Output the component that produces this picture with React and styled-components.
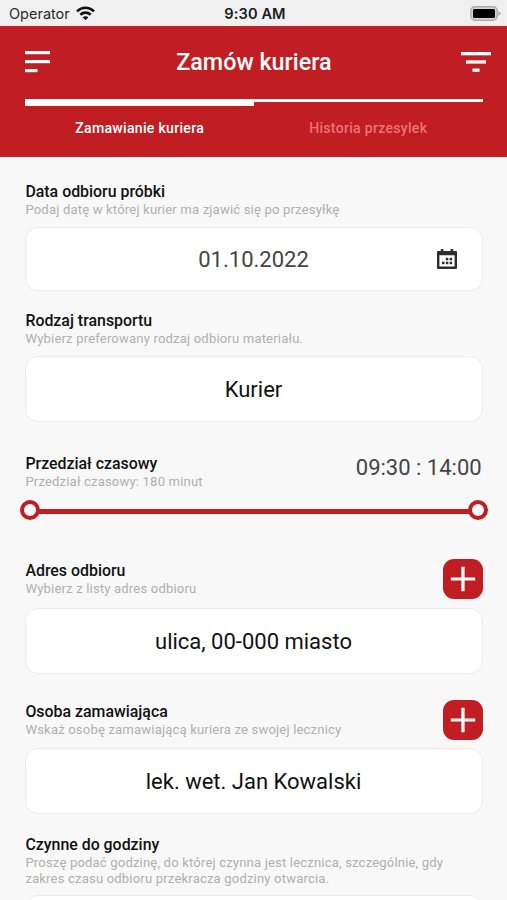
import React from 'react';
import styled, { createGlobalStyle } from 'styled-components';

const GlobalStyle = createGlobalStyle`
    :root {
        --color-primary: #c01e23;
        --color-background: #f8f8f8;
        --color-border: #ebebeb;
        --color-hint: #b0b0b0;
    }

    * {
        box-sizing: border-box;
    }

    body {
        margin: 0;
        background-color: var(--color-background);
        font-family: Roboto, "Liberation Sans", sans-serif;
    }
`;

const Screen = styled.div`
    height: 900px;
    overflow: hidden;
    background-color: var(--color-background);
`;

const StatusBar = styled.div`
    display: grid;
    grid-template-columns: 1fr auto 1fr;
    align-items: center;
    height: 26px;
    padding: 1px 6px 0 9px;
    background-color: #f0f0f0;
    color: #2b2b2b;
    font-family: Inter, sans-serif;
    font-size: 14.5px;
`;

const Carrier = styled.span`
    display: flex;
    align-items: center;
    gap: 6px;
`;

const Clock = styled.span`
    color: #1c1c1c;
    font-size: 14.6px;
    font-weight: 600;
    letter-spacing: 0.1px;
`;

const BatteryIcon = styled.svg`
    justify-self: end;
    margin-top: -1px;
`;

const HeaderStyled = styled.header`
    height: 131px;
    padding: 0 24.5px 0 25.4px;
    background-color: var(--color-primary);
    color: #fff;
`;

const TopRow = styled.div`
    display: grid;
    grid-template-columns: 30px 1fr 30px;
    align-items: center;
    height: 73px;
    margin-right: -8px;
    padding-bottom: 2px;
`;

const PageTitle = styled.h1`
    margin: 0;
    padding-right: 8px;
    font-size: 23.3px;
    font-weight: 500;
    text-align: center;
`;

const Tabs = styled.nav`
    display: flex;
`;

const Tab = styled.a`
    flex: 1;
    height: 50px;
    padding-top: ${({ $active }) => ($active ? '14px' : '18px')};
    border-top: ${({ $active }) => ($active ? '7px' : '3px')} solid #fff;
    color: ${({ $active }) => ($active ? '#fff' : '#ea7377')};
    font-size: 14.1px;
    font-weight: 500;
    letter-spacing: 0.28px;
    line-height: 16px;
    text-align: center;
`;

const Form = styled.main`
    padding: 25px 24.4px 0 25.4px;
`;

const Section = styled.section`
    height: ${({ $height }) => $height}px;
`;

const SectionHead = styled.div`
    display: flex;
    justify-content: space-between;
    height: ${({ $height }) => $height || 45}px;
`;

const Label = styled.h2`
    margin: 0;
    color: #111;
    font-size: 15.9px;
    font-weight: 500;
    line-height: 19px;
`;

const Hint = styled.p`
    margin: 1px 0 0;
    color: var(--color-hint);
    font-size: 13.1px;
    letter-spacing: 0.16px;
    line-height: 16px;
`;

const Field = styled.div`
    display: grid;
    grid-template-columns: 24px 1fr 24px;
    align-items: center;
    height: ${({ $height }) => $height || 66}px;
    padding: 0 21px;
    border: 1px solid var(--color-border);
    border-radius: 13px;
    background-color: #fff;
`;

const Value = styled.span`
    grid-column: 2;
    margin-left: -1px;
    color: ${({ $muted }) => ($muted ? '#444' : '#111')};
    font-size: 22px;
    text-align: center;
`;

const TimeRange = styled.span`
    margin: 0 1px 0 0;
    color: #444;
    font-size: 22px;
    line-height: 27px;
`;

const AddButton = styled.button`
    display: grid;
    place-items: center;
    width: 40px;
    height: 40px;
    margin-top: -2px;
    padding: 0;
    border: 0;
    border-radius: 11px;
    background-color: var(--color-primary);
`;

const Slider = styled.div`
    display: flex;
    align-items: center;
    margin: 1px -5px 0;
`;

const Track = styled.div`
    flex: 1;
    height: 5px;
    margin: 2px -1px 0;
    background-color: var(--color-primary);
`;

const Thumb = styled.div`
    width: 20px;
    height: 20px;
    border: 4px solid var(--color-primary);
    border-radius: 50%;
    background-color: #fff;
`;

const WifiIcon = () => (
    <svg width="19" height="15" viewBox="0 0 19 15" fill="none" stroke="#111" strokeWidth="2.6">
        <path d="M1 5.4C6 0.5 13 0.5 18 5.4" />
        <path d="M4.3 8.7C7.2 5.9 11.8 5.9 14.7 8.7" />
        <path d="M9.5 14.2L6.6 11.3C8.2 9.8 10.8 9.8 12.4 11.3Z" fill="#111" stroke="none" />
    </svg>
);

const Battery = () => (
    <BatteryIcon width="31" height="15" viewBox="0 0 31 15">
        <rect x="0.8" y="0.8" width="26.4" height="13.4" rx="4" fill="#d6d6d6" stroke="#adadad" strokeWidth="1.4" />
        <rect x="3" y="3" width="22" height="9" rx="1.2" fill="#000" />
        <path d="M28.4 5L31 7.5L28.4 10Z" fill="#adadad" />
    </BatteryIcon>
);

const MenuIcon = () => (
    <svg width="25" height="22" viewBox="0 0 25 22" fill="#fff">
        <rect width="25" height="3.2" />
        <rect y="9" width="25" height="3.2" />
        <rect y="18" width="12.5" height="3.2" />
    </svg>
);

const FilterIcon = () => (
    <svg width="30" height="20" viewBox="0 0 30 20" fill="#fff">
        <rect width="30" height="3.3" />
        <rect x="5" y="8.3" width="20" height="3.3" />
        <rect x="11.5" y="16.5" width="7" height="3.3" />
    </svg>
);

const CalendarIcon = () => (
    <svg width="20" height="21" viewBox="0 0 20 21">
        <path
            fill="#2d2d2d"
            fillRule="evenodd"
            d="M3.8 0H6.4V2H13.6V0H16.2V2H19Q20 2 20 3V19Q20 20 19 20H1Q0 20 0 19V3Q0 2 1 2H3.8ZM2.4 6.2V17.4H17.6V6.2Z"
        />
        <g fill="#2d2d2d">
            <rect x="8.8" y="8.8" width="2.5" height="2.5" />
            <rect x="12.6" y="8.8" width="2.5" height="2.5" />
            <rect x="5" y="12.7" width="2.5" height="2.5" />
            <rect x="8.8" y="12.7" width="2.5" height="2.5" />
            <rect x="12.6" y="12.7" width="2.5" height="2.5" />
        </g>
    </svg>
);

const PlusIcon = () => (
    <svg width="26" height="26" viewBox="0 0 26 26" stroke="#fff" strokeWidth="3.2">
        <path d="M0.8 13H25.2M13 0.8V25.2" />
    </svg>
);

const Head = ({ label, hint, height, children }) => (
    <SectionHead $height={height}>
        <div>
            <Label>{label}</Label>
            <Hint>{hint}</Hint>
        </div>
        {children}
    </SectionHead>
);

const App = () => {
    return (
        <Screen>
            <GlobalStyle />
            <StatusBar>
                <Carrier>Operator <WifiIcon /></Carrier>
                <Clock>9:30 AM</Clock>
                <Battery />
            </StatusBar>
            <HeaderStyled>
                <TopRow>
                    <MenuIcon />
                    <PageTitle>Zamów kuriera</PageTitle>
                    <FilterIcon />
                </TopRow>
                <Tabs>
                    <Tab $active>Zamawianie kuriera</Tab>
                    <Tab>Historia przesylek</Tab>
                </Tabs>
            </HeaderStyled>
            <Form>
                <Section $height={129}>
                    <Head label="Data odbioru próbki" hint="Podaj datę w której kurier ma zjawić się po przesyłkę" />
                    <Field $height={64}>
                        <Value $muted>01.10.2022</Value>
                        <CalendarIcon />
                    </Field>
                </Section>
                <Section $height={143}>
                    <Head label="Rodzaj transportu" hint="Wybierz preferowany rodzaj odbioru materiału." />
                    <Field>
                        <Value>Kurier</Value>
                    </Field>
                </Section>
                <Section $height={107}>
                    <Head label="Przedział czasowy" hint="Przedział czasowy: 180 minut">
                        <TimeRange>09:30 : 14:00</TimeRange>
                    </Head>
                    <Slider>
                        <Thumb />
                        <Track />
                        <Thumb />
                    </Slider>
                </Section>
                <Section $height={141}>
                    <Head height={47} label="Adres odbioru" hint="Wybierz z listy adres odbioru">
                        <AddButton><PlusIcon /></AddButton>
                    </Head>
                    <Field>
                        <Value>ulica, 00-000 miasto</Value>
                    </Field>
                </Section>
                <Section $height={133}>
                    <Head height={46} label="Osoba zamawiająca" hint="Wskaż osobę zamawiającą kuriera ze swojej lecznicy">
                        <AddButton><PlusIcon /></AddButton>
                    </Head>
                    <Field>
                        <Value>lek. wet. Jan Kowalski</Value>
                    </Field>
                </Section>
                <Section $height={132}>
                    <Head
                        height={60}
                        label="Czynne do godziny"
                        hint="Proszę podać godzinę, do której czynna jest lecznica, szczególnie, gdy zakres czasu odbioru przekracza godziny otwarcia."
                    />
                    <Field />
                </Section>
            </Form>
        </Screen>
    );
};

export default App;
